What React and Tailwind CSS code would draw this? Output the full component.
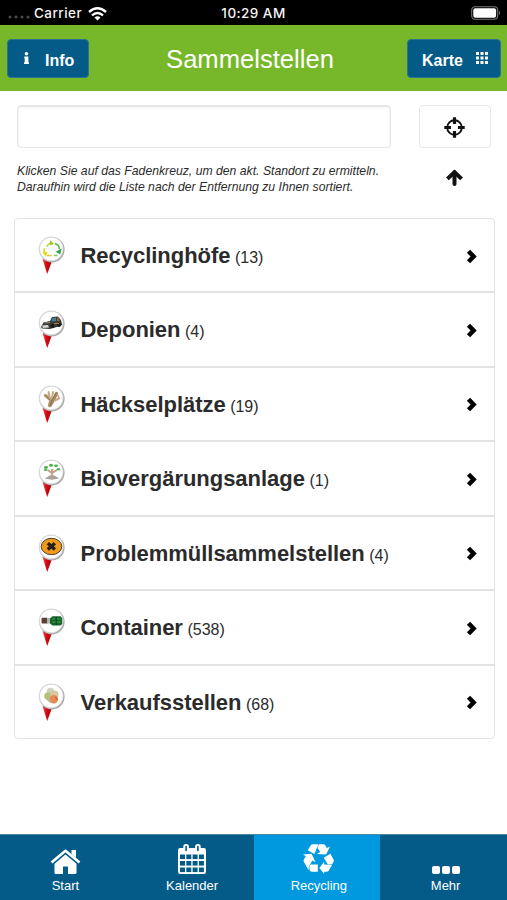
import React, { useState } from "react"

const RecyclingSymbol = () => (
  <g fill="none" strokeWidth="1.5">
    <path d="M9.5 11.5 L12.5 8.5 H15" stroke="#b9cf2a" />
    <path d="M18 8.5 L21.5 10.5 L22.5 14" stroke="#52b848" />
    <path d="M7.5 13 L7 16 L9 19" stroke="#e3d425" />
    <path d="M20.5 20.5 H17" stroke="#7cc576" />
    <path d="M10 20.5 H14.5" stroke="#d5cf2c" />
    <path d="M13 5.2 L17 8.4 L13.2 10.8Z" fill="#a3c62f" stroke="none" />
    <path d="M24.6 13.5 L23.2 19.4 L18.6 16.8Z" fill="#35a648" stroke="none" />
    <path d="M5.2 17.2 L10.5 17 L9 21.8Z" fill="#e8d91c" stroke="none" />
  </g>
)

const Bulldozer = () => (
  <g>
    <path d="M4 18 L6.5 13.5 L13 12 L15 8 L21 7.5 L24 11 L25.2 16 L20 18 L13 20 L5 19.5Z" fill="#3b3b3a" />
    <path d="M15.5 9 L19 8.5 L19 12 L14.5 12.5Z" fill="#3f7f9d" />
    <path d="M20 8.5 L22 9 L22.5 12 L20 12Z" fill="#8a6b35" />
    <path d="M5 16.5 L11 16 L12 18.5 L6 19Z" fill="#d8d8d4" />
    <path d="M8 14 L13 13.5" stroke="#8d8b84" />
    <circle cx="15.5" cy="17" r="2" fill="#181818" />
    <circle cx="22" cy="16" r="2" fill="#181818" />
    <path d="M17 14.5 H22" stroke="#b27d34" />
  </g>
)

const Branches = () => (
  <g fill="none" strokeLinecap="round">
    <path d="M12.5 21.5 L14 16 L8.5 11.5" stroke="#b49a73" strokeWidth="3.4" />
    <path d="M13.5 21 L17 15 L19.5 9.5" stroke="#a58962" strokeWidth="3.2" />
    <path d="M13 15 L11.5 8 M15 14 L16 8 M18 16.5 L22 14.5" stroke="#c2a985" strokeWidth="2" />
    <path d="M13.5 21 L15 16 L19 9 M9 12 L13 16" stroke="#806644" strokeWidth=".7" />
    <path d="M20.5 10.5 L22 14" stroke="#d48d78" strokeWidth="1.3" />
  </g>
)

const Seedling = () => (
  <g>
    <path d="M7.5 20.5 L12 18 L15 16.5 L20 19 L22 20.5 L15 21.8Z" fill="#a9a096" />
    <path d="M15 18 V11 M15 15 L10.5 12 M15 15 L20 12" stroke="#c2a184" strokeWidth="2" fill="none" />
    <g fill="#46b44b">
      <ellipse cx="9" cy="9.5" rx="2" ry="1.4" />
      <ellipse cx="14" cy="7.2" rx="2" ry="1.5" />
      <ellipse cx="19" cy="7.8" rx="2" ry="1.4" />
      <ellipse cx="21.5" cy="11.2" rx="1.7" ry="1.2" />
      <ellipse cx="8.5" cy="12" rx="1.8" ry="1" />
    </g>
  </g>
)

const Hazard = () => (
  <g>
    <ellipse cx="14.5" cy="13.5" rx="10.3" ry="8.2" fill="#f29a1d" stroke="#4c3e2b" strokeWidth="1" />
    <path d="M10.8 10.2 L17.9 16.6 M17.9 10.2 L10.8 16.6" stroke="#292018" strokeWidth="3.4" />
  </g>
)

const Bottle = () => (
  <g>
    <rect x="4.5" y="10.8" width="6.5" height="5.8" rx="1" fill="#5b4037" />
    <rect x="10" y="11" width="5" height="5.5" fill="#b3b6b3" />
    <path d="M13 11.5 L15.5 9.2 H23.5 L25.2 11 V17 L23.5 18.5 H15.5 L13 16.5Z" fill="#17652b" />
    <path d="M15.5 12 H18.5 M20 12 H23.5 M15.5 15 H23.5" stroke="#2e9440" strokeWidth="1.3" />
    <path d="M19.2 10 V18" stroke="#15351d" />
  </g>
)

const Vegetables = () => (
  <g>
    <circle cx="13.5" cy="9.5" r="3.8" fill="#cfd2bd" />
    <circle cx="11" cy="14" r="3.8" fill="#b8bf7c" />
    <circle cx="17.5" cy="12.5" r="4" fill="#d9c9a2" />
    <circle cx="16.8" cy="17.2" r="4.2" fill="#e98a55" />
    <path d="M10 17 L14 20.5" stroke="#b4b99a" strokeWidth="2" />
    <path d="M18.5 15 L20.5 18" stroke="#d2653a" strokeWidth="1.5" />
  </g>
)

const categories = [
  { name: "Recyclinghöfe", count: 13, Symbol: RecyclingSymbol },
  { name: "Deponien", count: 4, Symbol: Bulldozer },
  { name: "Häckselplätze", count: 19, Symbol: Branches },
  { name: "Biovergärungsanlage", count: 1, Symbol: Seedling },
  { name: "Problemmüllsammelstellen", count: 4, Symbol: Hazard },
  { name: "Container", count: 538, Symbol: Bottle },
  { name: "Verkaufsstellen", count: 68, Symbol: Vegetables },
]

const Pin = ({ children }) => (
  <svg className="w-[30px] h-[40px] shrink-0" viewBox="0 0 30 40">
    <defs>
      <linearGradient id="pin-spike" x1="0" x2="1">
        <stop offset="0" stopColor="#e86060" />
        <stop offset=".4" stopColor="#d80a12" />
        <stop offset="1" stopColor="#a30008" />
      </linearGradient>
    </defs>
    <path d="M5.5 24 L15 26 L10.2 39Z" fill="url(#pin-spike)" />
    <circle cx="14.9" cy="14.7" r="12.7" fill="#a9a9ab" />
    <circle cx="14.1" cy="13.9" r="12.4" fill="#d9d9da" />
    <circle cx="14.3" cy="14" r="11.2" fill="#fff" />
    {children}
  </svg>
)

const Chevron = () => (
  <svg className="w-[12px] h-[15px] mt-[2px]" viewBox="0 0 12 15">
    <path d="M2.5 2.2 L7.6 7.5 L2.5 12.8" fill="none" stroke="#000" strokeWidth="4.5" />
  </svg>
)

const HomeIcon = () => (
  <svg className="w-[31px] h-[25px]" viewBox="0 0 31 25" fill="#fff">
    <path d="M21.5 1 H26 V9 L21.5 5Z" />
    <path d="M1.5 13.5 L15.5 1.8 L29.5 13.5" fill="none" stroke="#fff" strokeWidth="2.7" strokeLinejoin="round" />
    <path d="M15.5 5.4 L26.5 14.7 V23.5 Q26.5 25 25 25 H18 V17.5 H13 V25 H6 Q4.5 25 4.5 23.5 V14.7Z" />
  </svg>
)

const CalendarIcon = () => (
  <svg className="w-[28px] h-[30px]" viewBox="0 0 28 30">
    <rect y="4" width="28" height="26" rx="2.2" fill="#fff" />
    <rect x="5.3" y="0" width="5.6" height="9" rx="2.5" fill="#fff" />
    <rect x="17.1" y="0" width="5.6" height="9" rx="2.5" fill="#fff" />
    <rect x="7.3" y="1.8" width="1.6" height="5.5" rx=".8" fill="#045b87" />
    <rect x="19.1" y="1.8" width="1.6" height="5.5" rx=".8" fill="#045b87" />
    {[10.5, 17, 23.5].map((y) =>
      [2, 8.3, 14.6, 20.9].map((x) => (
        <rect key={`${x}-${y}`} x={x} y={y} width="5" height="4.6" fill="#045b87" />
      ))
    )}
  </svg>
)

const RecycleIcon = () => (
  <svg className="w-[31px] h-[30px]" viewBox="0 0 31 30" fill="#fff">
    {/* top */}
    <path d="M9.8 .2 H15.4 L11.4 10 L4.8 6.2 L7.6 1.6 Q8.4 .2 9.8 .2Z" />
    <path d="M16 .2 H20.4 Q21.6 .2 22.4 1.6 L23.8 4 L27 2.8 L23 10.6 L14 10 L17.2 8 L14.4 3.4Z" />
    {/* right */}
    <path d="M20.8 13.8 L27.4 9.8 L30.4 15.2 Q31.2 16.8 30.2 18.4 L28.8 20.4 H24.8Z" />
    <path d="M29 21 L25.8 26.4 Q25 27.8 23.4 27.8 H21.2 V30 L16.4 24 L21.2 17.4 V20.6Z" />
    {/* left */}
    <path d="M0 10.6 L8.6 9.8 L12.6 18.2 L9.4 16.6 L6.4 21.4 Q5.2 23.4 5.8 26.6 L.8 17.8 Q.2 16.6 1 15.2 L2.8 12.2Z" />
    <path d="M7.4 20.6 H14.8 V27.8 H8.6 Q6.4 27.4 6.4 24.4 Q6.4 22.2 7.4 20.6Z" />
  </svg>
)

const DotsIcon = () => (
  <svg className="w-[28px] h-[8px]" viewBox="0 0 28 8" fill="#fff">
    <rect width="8" height="8" rx="2" />
    <rect x="10" width="8" height="8" rx="2" />
    <rect x="20" width="8" height="8" rx="2" />
  </svg>
)

const tabs = [
  { label: "Start", icon: <HomeIcon /> },
  { label: "Kalender", icon: <CalendarIcon /> },
  { label: "Recycling", icon: <RecycleIcon /> },
  { label: "Mehr", icon: <DotsIcon /> },
]

const App = () => {
  const [search, setSearch] = useState("")
  const [activeTab, setActiveTab] = useState("Recycling")

  return (
    <div className="flex flex-col h-[900px] w-[507px] overflow-hidden bg-white font-['Liberation_Sans',Arial,sans-serif] text-[#2b2b2b]">
      {/* STATUS BAR */}
      <div className="grid grid-cols-3 items-center h-[25px] shrink-0 bg-black text-[#f4f4f4] font-[Inter,sans-serif] text-[13.5px] font-medium tracking-[0.45px]">
        <div className="flex items-center pl-2 pt-[2px]">
          <svg className="w-[22px] h-[4px] mt-[6px]" viewBox="0 0 22 4" fill="#4a4a4a">
            <circle cx="2" cy="2" r="1.5" />
            <circle cx="8" cy="2" r="1.5" />
            <circle cx="14" cy="2" r="1.5" />
            <circle cx="20" cy="2" r="1.5" />
          </svg>
          <span className="ml-1">Carrier</span>
          <svg className="w-[19px] h-[14px] ml-[6px]" viewBox="0 0 19 14" fill="none" stroke="#fff" strokeWidth="2.4">
            <path d="M1 5 Q9.5 -2.5 18 5" />
            <path d="M4 8.3 Q9.5 3.6 15 8.3" />
            <path d="M6.5 10.5 Q9.5 8.2 12.5 10.5 L9.5 13.6Z" fill="#fff" stroke="none" />
          </svg>
        </div>
        <div className="text-center pt-[2px]">10:29 AM</div>
        <div className="flex justify-end pr-[6px]">
          <svg className="w-[30px] h-[14px]" viewBox="0 0 30 14">
            <rect x=".7" y=".7" width="26" height="12.6" rx="3.5" fill="none" stroke="#777" strokeWidth="1.1" />
            <rect x="2.3" y="2.3" width="22.8" height="9.4" rx="2" fill="#fff" />
            <path d="M28 4.8 Q30 7 28 9.2Z" fill="#777" />
          </svg>
        </div>
      </div>

      {/* HEADER */}
      <header className="flex items-center justify-between h-[66px] shrink-0 pl-[7px] pr-[6px] bg-[#76b82a] text-white">
        <button className="flex items-center w-[82px] h-[39px] pl-[16px] pt-[5px] rounded-[4px] bg-[#045b87] border border-[#2d7195] text-[16px] font-bold">
          <svg className="w-[5px] h-[12px] mb-[5px]" viewBox="0 0 5 12" fill="#fff">
            <circle cx="2.5" cy="1.8" r="1.8" />
            <path d="M.3 4.6 H4.4 V10.2 H5 V12 H0 V10.2 H.7 V6.2 H.3Z" />
          </svg>
          <span className="ml-[16px]">Info</span>
        </button>
        <h1 className="ml-[4px] text-[25.6px] leading-none pt-[3px]">Sammelstellen</h1>
        <button className="flex items-center w-[94px] h-[39px] pl-[14px] pt-[5px] rounded-[4px] bg-[#045b87] border border-[#2d7195] text-[16px] font-bold">
          <span>Karte</span>
          <svg className="w-[12px] h-[12px] ml-[13px] mb-[5px]" viewBox="0 0 12 12" fill="#fff">
            {[0, 4.5, 9].map((y) =>
              [0, 4.5, 9].map((x) => (
                <rect key={`${x}-${y}`} x={x} y={y} width="3" height="3" />
              ))
            )}
          </svg>
        </button>
      </header>

      <main className="flex flex-col grow">
        {/* SEARCH */}
        <div className="flex justify-between pl-[17px] pr-[16px] pt-[14px]">
          <input
            className="w-[374px] h-[43px] px-3 rounded-[4px] border border-[#e6e6e6] shadow-[inset_0_1px_2px_rgba(0,0,0,0.12)] outline-none"
            value={search}
            onChange={(e) => setSearch(e.target.value)}
          />
          <button className="flex items-center justify-center w-[72px] h-[43px] pt-px pr-px rounded-[4px] border border-[#e7e7e7]">
            <svg className="w-[21px] h-[21px]" viewBox="0 0 21 21" fill="none" stroke="#111">
              <circle cx="10.5" cy="10.5" r="7.3" strokeWidth="1.9" />
              <path d="M10.5 .3 V7 M10.5 14 V20.7 M.3 10.5 H7 M14 10.5 H20.7" strokeWidth="3.2" />
            </svg>
          </button>
        </div>
        <div className="flex justify-between h-[70px] pl-[17px] pr-[43px] pt-[15px]">
          <p className="text-[12.2px] leading-[16px] italic tracking-[0.015px]">
            Klicken Sie auf das Fadenkreuz, um den akt. Standort zu ermitteln.
            <br />
            Daraufhin wird die Liste nach der Entfernung zu Ihnen sortiert.
          </p>
          <svg className="w-[19px] h-[17px] mt-[6px]" viewBox="0 0 19 17" fill="none" stroke="#111" strokeWidth="4">
            <path d="M2.4 9.9 L9.5 3.2 L16.6 9.9" />
            <path d="M9.5 3.2 V15" strokeLinecap="round" strokeWidth="4" />
          </svg>
        </div>

        {/* LIST */}
        <ul className="ml-[13.5px] mr-[12.5px] rounded-[4px] border border-[#e4e4e4] divide-y-2 divide-[#e4e4e4]">
          {categories.map(({ name, count, Symbol }) => (
            <li key={name} className="flex items-center h-[74.5px] first:h-[74px] last:h-[72.5px] pl-[22px] pr-[16px]">
              <Pin>
                <Symbol />
              </Pin>
              <div className="grow ml-[14px] pt-[4px] leading-[28px]">
                <span className="text-[22px] font-bold tracking-[-0.03px]">{name}</span>
                <span className="ml-[4.5px] text-[16px]">({count})</span>
              </div>
              <Chevron />
            </li>
          ))}
        </ul>
      </main>

      {/* TAB BAR */}
      <nav className="grid grid-cols-4 h-[66px] shrink-0 text-white text-[13px]">
        {tabs.map(({ label, icon }) => (
          <button
            key={label}
            onClick={() => setActiveTab(label)}
            className={`flex flex-col items-center justify-end pb-[7px] pl-[4px] border-t border-[#4b88a8] ${
              activeTab === label ? "bg-[#0098de]" : "bg-[#045b87]"
            }`}
          >
            {icon}
            <span className="mt-[4px] leading-[15px]">{label}</span>
          </button>
        ))}
      </nav>
    </div>
  )
}

export default App
